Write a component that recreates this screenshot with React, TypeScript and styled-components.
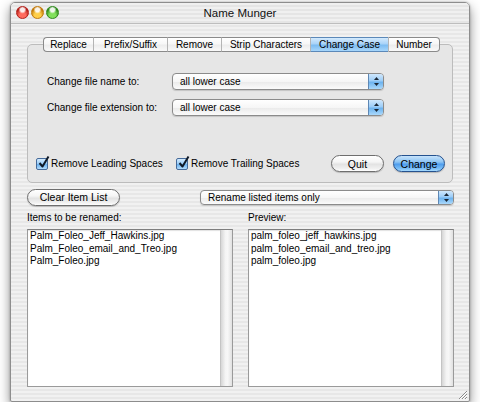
import React from "react";
import styled, { createGlobalStyle } from "styled-components";

const Global = createGlobalStyle`
  html, body { margin: 0; padding: 0; background: #ffffff; }
  body { font-family: "Liberation Sans", Arial, sans-serif; font-size: 10px; color: #000; }
  * { box-sizing: border-box; }
`;

const stripes = `repeating-linear-gradient(to bottom, #f1f1f1 0px, #f1f1f1 2px, #e7e7e7 2px, #e7e7e7 4px)`;

const Window = styled.div`
  position: relative;
  margin: 2px 0 0 10px;
  width: 460px;
  height: 400px;
  border: 1px solid #8d8d8d;
  border-radius: 5px 5px 2px 2px;
  box-shadow: 0 5px 12px rgba(0, 0, 0, 0.45), 0 0 2px rgba(0, 0, 0, 0.3);
  display: flex;
  flex-direction: column;
  overflow: hidden;
  background: ${stripes};
`;

const TitleBar = styled.div`
  position: relative;
  height: 21px;
  flex: none;
  display: flex;
  align-items: center;
  justify-content: center;
  background: repeating-linear-gradient(to bottom, #f0f0f0 0px, #f0f0f0 2px, #e5e5e5 2px, #e5e5e5 4px);
  border-bottom: 1px solid #bdbdbd;
  font-size: 11.5px;
  color: #111;
`;

const Lights = styled.div`
  position: absolute;
  left: 5px;
  top: 3px;
  display: flex;
  gap: 2px;
`;

const Light = styled.span<{ $c: string; $d: string }>`
  width: 13px;
  height: 13px;
  border-radius: 50%;
  border: 1px solid ${(p) => p.$d};
  background:
    radial-gradient(circle at 50% 25%, rgba(255,255,255,0.9) 0 2px, rgba(255,255,255,0) 4px),
    radial-gradient(circle at 50% 75%, ${(p) => p.$c} 0 3px, ${(p) => p.$d} 7px);
`;

const Body = styled.div`
  flex: 1;
  display: flex;
  flex-direction: column;
  padding: 13px 16px 0 16px;
`;

const TabStrip = styled.div`
  position: relative;
  z-index: 2;
  display: flex;
  justify-content: center;
  padding-left: 3px;
`;

const Tab = styled.div<{ $w: number; $sel?: boolean; $first?: boolean; $last?: boolean }>`
  width: ${(p) => p.$w}px;
  height: 15px;
  display: flex;
  align-items: center;
  justify-content: center;
  font-size: 10px;
  border-top: 1px solid #8a8a8a;
  border-bottom: 1px solid #8a8a8a;
  border-left: ${(p) => (p.$first ? "1px solid #8a8a8a" : "1px solid #b4b4b4")};
  border-right: ${(p) => (p.$last ? "1px solid #8a8a8a" : "none")};
  border-radius: ${(p) => (p.$first ? "4px 0 0 4px" : p.$last ? "0 4px 4px 0" : "0")};
  background: ${(p) =>
    p.$sel
      ? "linear-gradient(to bottom, #d3eafd 0%, #a9d3f8 45%, #7dbcf1 55%, #a6d6fb 100%)"
      : "linear-gradient(to bottom, #ffffff 0%, #f7f7f7 45%, #ececec 55%, #fafafa 100%)"};
  ${(p) => (p.$sel ? "border-top-color:#5b88b8; border-bottom-color:#5b88b8;" : "")}
`;

const GroupBox = styled.div`
  margin-top: -8px;
  height: 139px;
  background: #e6e6e6;
  border: 1px solid #bcbcbc;
  border-radius: 5px;
  padding: 28px 7px 0 8px;
  display: flex;
  flex-direction: column;
`;

const FormGrid = styled.div`
  margin-left: 11px;
  display: grid;
  grid-template-columns: 125px 212px;
  row-gap: 9px;
  align-items: center;
`;

const Label = styled.span`
  font-size: 10px;
  white-space: nowrap;
`;

const PopupBox = styled.div<{ $h: number; $w?: number }>`
  height: ${(p) => p.$h}px;
  ${(p) => (p.$w ? `width: ${p.$w}px;` : "")}
  display: flex;
  align-items: stretch;
  border: 1px solid #8b8b8b;
  border-radius: 4px;
  overflow: hidden;
  background: linear-gradient(to bottom, #ffffff 0%, #f6f6f6 50%, #ebebeb 55%, #fbfbfb 100%);
  box-shadow: 0 1px 1px rgba(0,0,0,0.15);
`;

const PopupText = styled.span`
  flex: 1;
  display: flex;
  align-items: center;
  padding-left: 7px;
  font-size: 10px;
  white-space: nowrap;
`;

const PopupCap = styled.span`
  width: 15px;
  border-left: 1px solid #5e87b4;
  background: linear-gradient(to bottom, #cfe7fc 0%, #9dcdf7 45%, #6db3ef 55%, #aad8fb 100%);
  display: flex;
  align-items: center;
  justify-content: center;
`;

const Arrows = () => (
  <svg width="7" height="9" viewBox="0 0 7 9">
    <path d="M3.5 0 L6 3 L1 3 Z" fill="#1c2836" />
    <path d="M3.5 9 L6 6 L1 6 Z" fill="#1c2836" />
  </svg>
);

const Popup = ({ text, h, w }: { text: string; h: number; w?: number }) => (
  <PopupBox $h={h} $w={w}>
    <PopupText>{text}</PopupText>
    <PopupCap>
      <Arrows />
    </PopupCap>
  </PopupBox>
);

const CheckRow = styled.div`
  margin-top: 39px;
  display: flex;
  align-items: center;
  height: 17px;
`;

const CheckItem = styled.label<{ $w?: number }>`
  display: flex;
  align-items: center;
  gap: 3px;
  ${(p) => (p.$w ? `width: ${p.$w}px;` : "")}
  font-size: 10px;
  white-space: nowrap;
`;

const CheckBox = styled.span`
  width: 12px;
  height: 12px;
  border: 1px solid #456a9a;
  border-radius: 2px;
  background: linear-gradient(to bottom, #d3eafd 0%, #9ccdf7 45%, #6cb1ee 55%, #b3ddfc 100%);
  position: relative;
`;

const Tick = styled.svg`
  position: absolute;
  left: 1px;
  top: -4px;
`;

const Check = () => (
  <CheckBox>
    <Tick width="12" height="14" viewBox="0 0 12 14">
      <path d="M1.5 8 L4.5 11.5 L10.5 1.5" fill="none" stroke="#101a28" strokeWidth="2" strokeLinejoin="round" />
    </Tick>
  </CheckBox>
);

const PushButton = styled.div<{ $w: number; $blue?: boolean; $ml?: string }>`
  width: ${(p) => p.$w}px;
  height: 17px;
  margin-left: ${(p) => p.$ml || "0"};
  border-radius: 9px;
  display: flex;
  align-items: center;
  justify-content: center;
  font-size: 10.5px;
  border: 1px solid ${(p) => (p.$blue ? "#25528f" : "#6e6e6e")};
  background: ${(p) =>
    p.$blue
      ? "linear-gradient(to bottom, #c7e3fb 0%, #8cc4f4 40%, #4f9ded 55%, #7cc0f8 85%, #a8dafd 100%)"
      : "linear-gradient(to bottom, #ffffff 0%, #f5f5f5 40%, #e3e3e3 55%, #f1f1f1 85%, #ffffff 100%)"};
  box-shadow: 0 1px 1px rgba(0,0,0,0.2);
`;

const ControlRow = styled.div`
  margin-top: 5px;
  display: flex;
  align-items: center;
  height: 18px;
`;

const RightPopup = styled.div`
  margin-left: auto;
  margin-right: -1px;
`;

const Columns = styled.div`
  margin-top: 4px;
  display: grid;
  grid-template-columns: 206px 206px;
  column-gap: 15px;
`;

const Column = styled.div`
  display: flex;
  flex-direction: column;
`;

const ColLabel = styled.div`
  height: 14px;
  margin-bottom: 5px;
  display: flex;
  align-items: center;
  font-size: 10px;
`;

const ListBox = styled.div`
  height: 158px;
  border: 1px solid #9a9a9a;
  border-top-color: #7e7e7e;
  background: #fff;
  display: flex;
  box-shadow: inset 0 1px 1px rgba(0,0,0,0.12);
`;

const ListItems = styled.div`
  flex: 1;
  padding: 0 2px;
  font-size: 10px;
  line-height: 12.5px;
`;

const ScrollTrack = styled.div`
  width: 12px;
  border-left: 1px solid #c4c4c4;
  background: linear-gradient(to right, #d6d6d6 0%, #f4f4f4 40%, #f7f7f7 60%, #e1e1e1 100%);
`;

const Grip = styled.svg`
  position: absolute;
  right: 1px;
  bottom: 1px;
`;

const tabs = [
  { t: "Replace", w: 50 },
  { t: "Prefix/Suffix", w: 74 },
  { t: "Remove", w: 54 },
  { t: "Strip Characters", w: 89 },
  { t: "Change Case", w: 78 },
  { t: "Number", w: 52 },
];

const original = ["Palm_Foleo_Jeff_Hawkins.jpg", "Palm_Foleo_email_and_Treo.jpg", "Palm_Foleo.jpg"];

export default function App() {
  return (
    <>
      <Global />
      <Window>
        <TitleBar>
          <Lights>
            <Light $c="#ff6b5e" $d="#b4201a" />
            <Light $c="#ffcf4a" $d="#c27a0a" />
            <Light $c="#82e05c" $d="#2f8a1c" />
          </Lights>
          Name Munger
        </TitleBar>
        <Body>
          <TabStrip>
            {tabs.map((t, i) => (
              <Tab key={t.t} $w={t.w} $sel={t.t === "Change Case"} $first={i === 0} $last={i === tabs.length - 1}>
                {t.t}
              </Tab>
            ))}
          </TabStrip>
          <GroupBox>
            <FormGrid>
              <Label>Change file name to:</Label>
              <Popup text="all lower case" h={17} />
              <Label>Change file extension to:</Label>
              <Popup text="all lower case" h={17} />
            </FormGrid>
            <CheckRow>
              <CheckItem $w={140}>
                <Check />
                Remove Leading Spaces
              </CheckItem>
              <CheckItem>
                <Check />
                Remove Trailing Spaces
              </CheckItem>
              <PushButton $w={53} $ml="auto">Quit</PushButton>
              <PushButton $w={52} $blue $ml="9px">Change</PushButton>
            </CheckRow>
          </GroupBox>
          <ControlRow>
            <PushButton $w={93}>Clear Item List</PushButton>
            <RightPopup>
              <Popup text="Rename listed items only" h={15} w={254} />
            </RightPopup>
          </ControlRow>
          <Columns>
            <Column>
              <ColLabel>Items to be renamed:</ColLabel>
              <ListBox>
                <ListItems>
                  {original.map((s) => (
                    <div key={s}>{s}</div>
                  ))}
                </ListItems>
                <ScrollTrack />
              </ListBox>
            </Column>
            <Column>
              <ColLabel>Preview:</ColLabel>
              <ListBox>
                <ListItems>
                  {original.map((s) => (
                    <div key={s}>{s.toLowerCase()}</div>
                  ))}
                </ListItems>
                <ScrollTrack />
              </ListBox>
            </Column>
          </Columns>
        </Body>
        <Grip width="11" height="11" viewBox="0 0 11 11">
          <path d="M10 2 L2 10 M10 5 L5 10 M10 8 L8 10" stroke="#8a8a8a" strokeWidth="1" />
          <path d="M10 3 L3 10 M10 6 L6 10 M10 9 L9 10" stroke="#ffffff" strokeWidth="1" />
        </Grip>
      </Window>
    </>
  );
}
